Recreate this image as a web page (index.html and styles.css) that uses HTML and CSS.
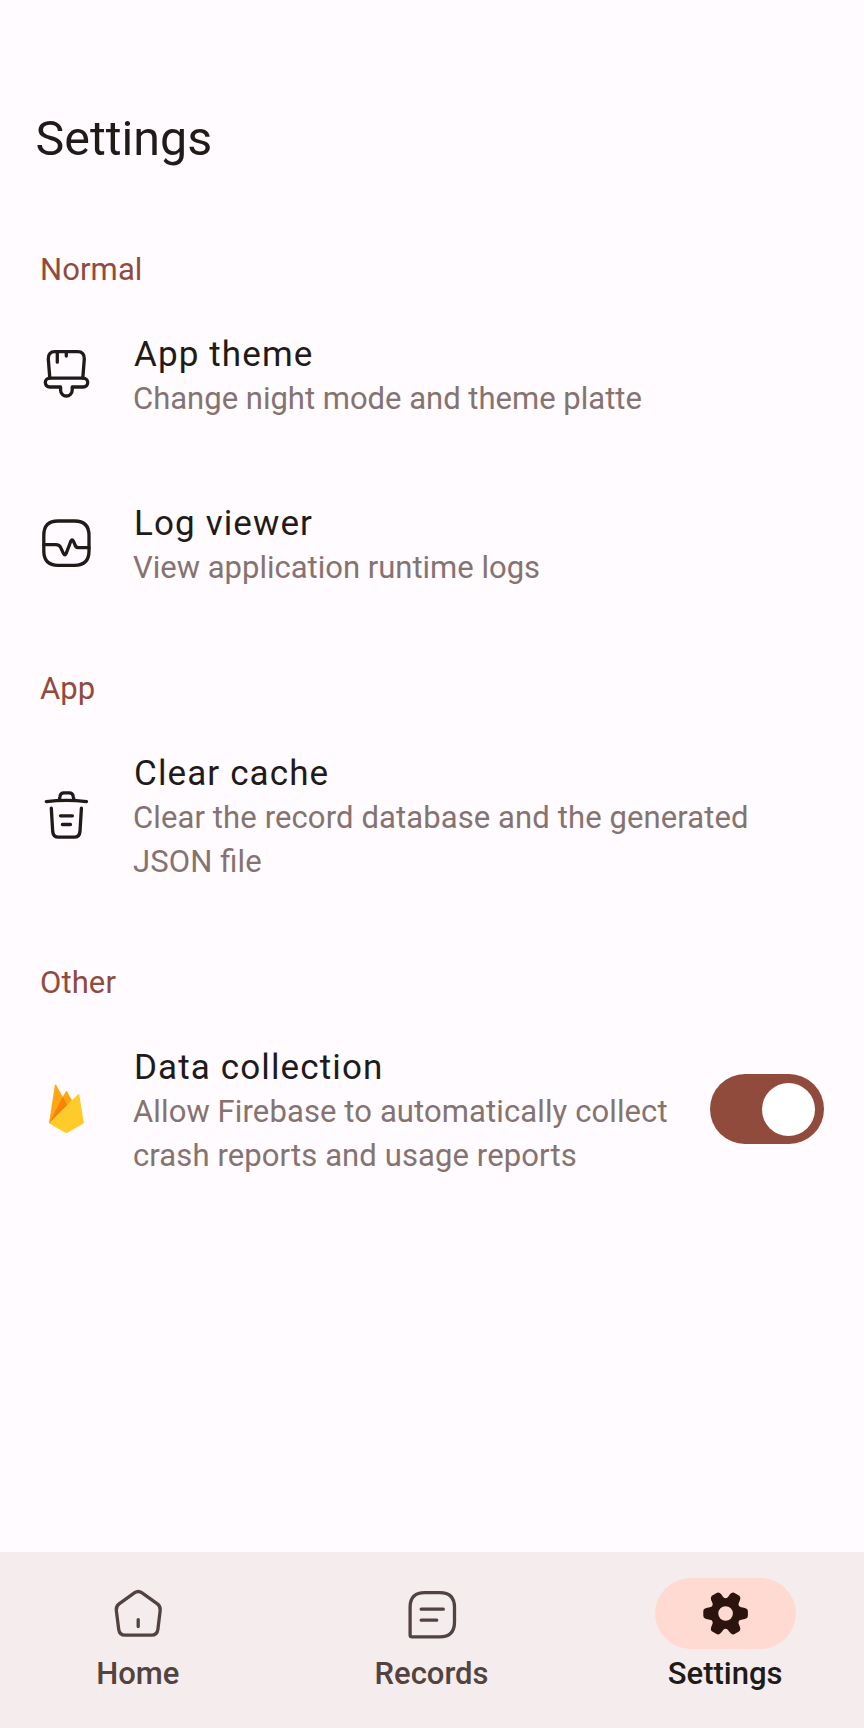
FILE: index.html
```html
<!DOCTYPE html>
<html lang="en">
<head>
<meta charset="utf-8">
<title>Settings</title>
<link rel="stylesheet" href="styles.css">
</head>
<body>
<div class="screen">
  <header class="app-bar"><h1 class="app-title">Settings</h1></header>
  <main class="content">
    <h2 class="section">Normal</h2>
    <div class="row">
      <svg class="icon" viewBox="0 0 54 54">
        <path d="M10.8 31 9.3 12Q9 4.700 16 4.700H38.600Q45.600 4.700 45.300 12L43.800 31M18.300 5V15.200M27.300 5V9"/>
        <path d="M10.700 31.200H44.300A4.400 4.400 0 0 1 44.300 40H33.200V43.200A5.800 5.800 0 0 1 21.600 43.200V40H10.700A4.400 4.400 0 0 1 10.700 31.200Z"/>
      </svg>
      <div class="text"><div class="title">App theme</div><div class="sub">Change night mode and theme platte</div></div>
    </div>
    <div class="row">
      <svg class="icon" viewBox="0 0 54 54">
        <path d="M19 5H35.500Q50 5 50 19.500V35Q50 49.300 35.500 49.300H19Q4.800 49.300 4.800 35V19.500Q4.800 5 19 5Z"/>
        <path d="M5 28.700H17Q20.300 28.700 21.600 31.400L24.500 37.600Q26 40.500 27.300 37.200L31.700 25.500Q33 22.500 34.500 25.300L36.300 29.500Q37.300 31.700 39.800 31.700H50"/>
      </svg>
      <div class="text"><div class="title">Log viewer</div><div class="sub">View application runtime logs</div></div>
    </div>
    <h2 class="section">App</h2>
    <div class="row">
      <svg class="icon" viewBox="0 0 54 54">
        <path d="M7.300 13.600Q27.400 11.200 47.500 13.600M20.300 12.200 21 8.200Q21.500 4.800 25 4.800H30.200Q33.700 4.800 34.200 8.200L35 12.200"/>
        <path d="M12.300 20.200 13.700 43.500Q14.200 49.200 19.500 49.200H35.200Q40.500 49.200 41 43.500L42.400 20.200M21.500 27.800H33.400M23.400 36.500H31.500"/>
      </svg>
      <div class="text"><div class="title">Clear cache</div><div class="sub sub-long">Clear the record database and the generated JSON file</div></div>
    </div>
    <h2 class="section">Other</h2>
    <div class="row">
      <svg class="icon firebase" viewBox="0 0 54 54">
        <path fill="#ffa712" d="M10 41.300 15.900 3.300Q16.500 2 17.400 3.200L23.700 14.700 26.800 9.500Q27.500 8.500 28.200 9.500L34 20.500 24 41Z"/>
        <path fill="#f6820c" d="M10 41.300 23.700 14.700 29.300 24.500Z"/>
        <path fill="#ffcb2b" d="M10 41.300 38.800 12.500Q40 11.700 40.300 13L45 41.300 28.800 50.500Q27.300 51.300 25.800 50.500Z"/>
      </svg>
      <div class="text"><div class="title">Data collection</div><div class="sub sub-long">Allow Firebase to automatically collect crash reports and usage reports</div></div>
      <div class="switch"><div class="thumb"></div></div>
    </div>
  </main>
  <nav class="nav">
    <div class="nav-item">
      <div class="pill"><svg class="icon nav-icon" viewBox="-0.400 -0.300 54 54">
        <path d="M23.300 6.400Q26.800 4 30.300 6.400L46 17.600Q49.200 20 48.800 24L46.500 43Q45.800 48.900 40 48.900H13.700Q8 48.900 7.300 43L4.900 24Q4.500 20 7.700 17.600ZM26.800 33.300V40.200"/>
      </svg></div>
      <span class="label">Home</span>
    </div>
    <div class="nav-item">
      <div class="pill"><svg class="icon nav-icon" viewBox="-0.300 0 54 54">
        <path d="M4.800 49V21Q4.800 6.700 19.500 6.700H34.500Q49.200 6.700 49.200 21.500V36Q49.200 50.900 34.500 50.900H6.700Q4.800 50.900 4.800 49ZM15.900 23.200H38M15.900 34.200H31.400"/>
      </svg></div>
      <span class="label">Records</span>
    </div>
    <div class="nav-item active">
      <div class="pill"><svg class="icon gear" viewBox="-27.600 -27.500 54 54">
        <defs><path id="tooth" d="M13.250-7.650C14-6.350 15.500-6.150 17-6 20.500-5.600 22.300-4.700 22.300-2V2C22.300 4.700 20.500 5.600 17 6 15.500 6.150 14 6.350 13.250 7.650L8.660 5V-5Z"/></defs>
        <use href="#tooth"/>
        <use href="#tooth" transform="rotate(60)"/>
        <use href="#tooth" transform="rotate(120)"/>
        <use href="#tooth" transform="rotate(180)"/>
        <use href="#tooth" transform="rotate(240)"/>
        <use href="#tooth" transform="rotate(300)"/>
        <circle class="hub" r="11.200"/>
      </svg></div>
      <span class="label">Settings</span>
    </div>
  </nav>
</div>
</body>
</html>
```
FILE: styles.css
```css
* { box-sizing: border-box; }
body {
  margin: 0;
  background: #fffbff;
  color: #201a19;
  font-family: Roboto, "Liberation Sans", sans-serif;
}
.screen {
  width: 864px;
  height: 1728px;
  display: flex;
  flex-direction: column;
  overflow: hidden;
}
.app-bar { height: 209px; padding: 107px 0 0 35.500px; }
.app-title { margin: 0; font-size: 48.400px; font-weight: 400; line-height: 64px; }
.content { flex: 1; }
.section {
  margin: 0;
  height: 81px;
  padding: 41px 0 0 40px;
  font-size: 31px;
  font-weight: 400;
  line-height: 40px;
  letter-spacing: 0.100px;
  color: #904b3c;
}
.row {
  display: flex;
  align-items: center;
  min-height: 169px;
  padding: 0 40px 0 39px;
}
.icon {
  flex: none;
  width: 54px;
  height: 54px;
  fill: none;
  stroke: #201a19;
  stroke-width: 3.300px;
  stroke-linecap: round;
  stroke-linejoin: round;
}
.row .icon { margin-bottom: 2px; }
.firebase { stroke: none; }
.text { flex: 1; padding: 43px 30px 38px 40px; }
.title { padding-left: 1px; font-size: 35px; line-height: 44px; letter-spacing: 1.120px; }
.sub { font-size: 31px; line-height: 44px; color: #857370; }
.sub-long { letter-spacing: 0.110px; font-feature-settings: "liga" 1; }
.switch {
  flex: none;
  display: flex;
  justify-content: flex-end;
  align-items: center;
  width: 114.500px;
  height: 70.500px;
  margin-bottom: 1px;
  padding: 9px;
  border-radius: 36px;
  background: #904b3c;
}
.thumb { width: 53px; height: 53px; border-radius: 50%; background: #fff; }
.nav {
  display: flex;
  gap: 18px;
  height: 176px;
  padding: 26px 1px 0 0;
  background: #f5eded;
}
.nav-item {
  flex: 1;
  display: flex;
  flex-direction: column;
  align-items: center;
  color: #534340;
}
.pill {
  display: flex;
  align-items: center;
  justify-content: center;
  width: 141px;
  height: 70.500px;
  border-radius: 36px;
}
.nav-icon { stroke: #534340; }
.label { margin-top: 7px; font-size: 31px; line-height: 36px; font-weight: 500; }
.active { color: #201a19; }
.active .pill { background: #ffdad3; }
.gear { fill: #2b130e; stroke: none; }
.hub { fill: none; stroke: #2b130e; stroke-width: 7.800px; }
```
